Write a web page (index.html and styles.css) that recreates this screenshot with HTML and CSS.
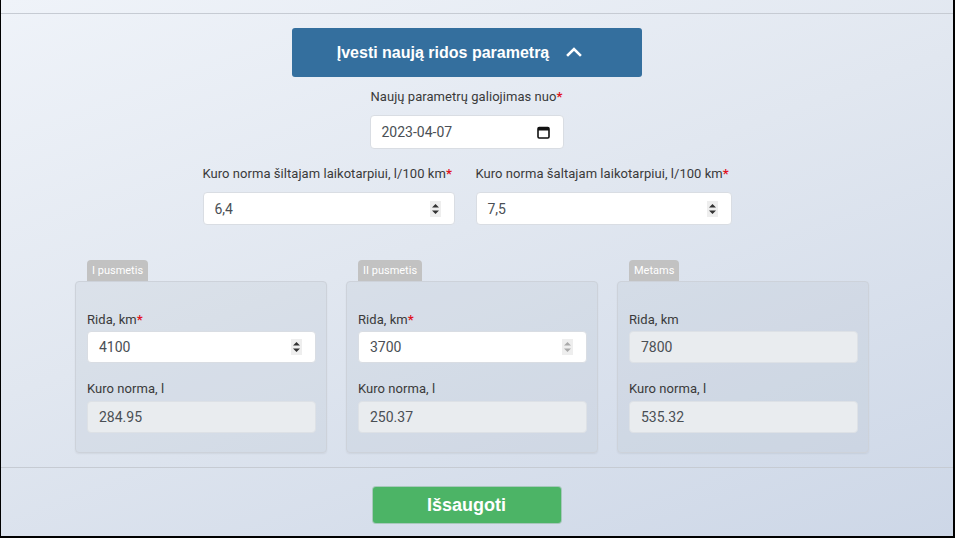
FILE: index.html
```html
<!DOCTYPE html>
<html lang="lt">
<head>
<meta charset="utf-8">
<title>Ridos parametrai</title>
<link rel="stylesheet" href="styles.css">
</head>
<body>
<div class="frame">
  <div class="topline"></div>
  <div class="content">
    <button class="toggle" type="button">
      <span>Įvesti naują ridos parametrą</span>
      <svg class="chev" width="16" height="11" viewBox="0 0 16 11"><path d="M2 9 L8 3 L14 9" fill="none" stroke="#fff" stroke-width="2.6" stroke-linecap="square"/></svg>
    </button>

    <div class="field center">
      <label class="lbl">Naujų parametrų galiojimas nuo<span class="req">*</span></label>
      <div class="inp date">
        <span class="val">2023-04-07</span>
        <svg class="cal" width="13" height="13" viewBox="0 0 13 13"><rect x="1" y="1.5" width="11" height="10.5" rx="1.2" fill="none" stroke="#111" stroke-width="1.6"/><rect x="1" y="1.5" width="11" height="3" fill="#111"/></svg>
      </div>
    </div>

    <div class="row">
      <div class="field w252">
        <label class="lbl">Kuro norma šiltajam laikotarpiui, l/100 km<span class="req">*</span></label>
        <div class="inp"><span class="val">6,4</span><span class="spin"><svg width="11" height="16" viewBox="0 0 11 16"><path d="M2 6.5 L5.5 3 L9 6.5 Z M2 9.5 L5.5 13 L9 9.5 Z" fill="#333"/></svg></span></div>
      </div>
      <div class="field w256">
        <label class="lbl">Kuro norma šaltajam laikotarpiui, l/100 km<span class="req">*</span></label>
        <div class="inp"><span class="val">7,5</span><span class="spin"><svg width="11" height="16" viewBox="0 0 11 16"><path d="M2 6.5 L5.5 3 L9 6.5 Z M2 9.5 L5.5 13 L9 9.5 Z" fill="#333"/></svg></span></div>
      </div>
    </div>

    <div class="groups">
      <div class="group">
        <div class="legend">I pusmetis</div>
        <div class="box">
          <label class="lbl">Rida, km<span class="req">*</span></label>
          <div class="inp small"><span class="val">4100</span><span class="spin"><svg width="11" height="16" viewBox="0 0 11 16"><path d="M2 6.5 L5.5 3 L9 6.5 Z M2 9.5 L5.5 13 L9 9.5 Z" fill="#333"/></svg></span></div>
          <label class="lbl second">Kuro norma, l</label>
          <div class="inp small ro"><span class="val">284.95</span></div>
        </div>
      </div>
      <div class="group">
        <div class="legend">II pusmetis</div>
        <div class="box">
          <label class="lbl">Rida, km<span class="req">*</span></label>
          <div class="inp small"><span class="val">3700</span><span class="spin"><svg width="11" height="16" viewBox="0 0 11 16"><path d="M2 6.5 L5.5 3 L9 6.5 Z M2 9.5 L5.5 13 L9 9.5 Z" fill="#aaa"/></svg></span></div>
          <label class="lbl second">Kuro norma, l</label>
          <div class="inp small ro"><span class="val">250.37</span></div>
        </div>
      </div>
      <div class="group">
        <div class="legend">Metams</div>
        <div class="box">
          <label class="lbl">Rida, km</label>
          <div class="inp small ro"><span class="val">7800</span></div>
          <label class="lbl second">Kuro norma, l</label>
          <div class="inp small ro"><span class="val">535.32</span></div>
        </div>
      </div>
    </div>
  </div>
  <div class="bottomline"></div>
  <div class="actions">
    <button class="save" type="button">Išsaugoti</button>
  </div>
</div>
</body>
</html>
```
FILE: styles.css
```css
html, body {
  margin: 0;
  padding: 0;
}
body {
  font-family: Roboto, "Liberation Sans", Arial, sans-serif;
  color: #333;
}
.frame {
  box-sizing: border-box;
  width: 955px;
  height: 538px;
  border-left: 1px solid #000;
  border-right: 2px solid #000;
  border-bottom: 2px solid #000;
  background: linear-gradient(160deg, #eff3f9 0%, #e1e7f0 45%, #cdd7e7 100%);
  overflow: hidden;
}
.topline {
  margin-top: 13px;
  border-top: 1px solid #c6cbd3;
}
.content {
  padding-right: 21px;
  display: flex;
  flex-direction: column;
  align-items: center;
}
.toggle {
  margin-top: 14px;
  width: 350px;
  height: 49px;
  border: 0;
  border-radius: 3px;
  background: #346f9e;
  color: #fff;
  font-family: "Liberation Sans", Arial, sans-serif;
  font-weight: bold;
  font-size: 16px;
  display: flex;
  align-items: center;
  justify-content: center;
  gap: 17px;
  padding: 0 14px 0 0;
}
.chev {
  margin-top: -2px;
}
.field {
  display: flex;
  flex-direction: column;
}
.field.center {
  align-items: center;
  margin-top: 10px;
}
.lbl {
  font-size: 13px;
  line-height: 20px;
  color: #3a3a3a;
  display: block;
  letter-spacing: 0.05px;
}
.req {
  color: #e0141e;
  font-weight: bold;
}
.inp {
  box-sizing: border-box;
  background: #fff;
  border: 1px solid #d9dde3;
  border-radius: 4px;
  height: 34px;
  display: flex;
  align-items: center;
  padding: 0 10px 0 11px;
  font-size: 14px;
  color: #4a4f55;
}
.val {
  flex: 1;
}
.field.center .lbl {
  margin-bottom: 8px;
}
.date {
  width: 194px;
}
.cal {
  margin-right: 3px;
}
.spin {
  width: 11px;
  height: 16px;
  background: #eeeeee;
  display: flex;
  margin-right: 3px;
}
.row {
  display: flex;
  gap: 21px;
  margin-top: 15px;
  margin-left: 1px;
}
.row .lbl {
  margin-bottom: 8px;
}
.row .inp {
  height: 33px;
}
.w252 { width: 252px; }
.w256 { width: 256px; }
.w252 .inp, .w256 .inp { width: 100%; }
.groups {
  display: flex;
  gap: 19px;
  margin-top: 35px;
  margin-left: 11px;
}
.group {
  width: 252px;
  display: flex;
  flex-direction: column;
  align-items: flex-start;
}
.legend {
  margin-left: 12px;
  background: #c2c2c2;
  color: #fff;
  font-size: 11px;
  line-height: 21px;
  padding: 0 5px;
  border-radius: 4px 4px 0 0;
}
.box {
  box-sizing: border-box;
  width: 100%;
  height: 172px;
  border: 1px solid #cdd2da;
  border-radius: 4px;
  background: rgba(180, 188, 200, 0.18);
  box-shadow: 0 1px 2px rgba(0, 0, 0, 0.06);
  padding: 28px 10px 0 11px;
}
.box .lbl {
  margin-bottom: 1px;
}
.box .lbl.second {
  margin-top: 16px;
  margin-bottom: 2px;
}
.inp.small {
  height: 32px;
  width: 100%;
}
.inp.ro {
  background: #e9ecef;
  border-color: #dde1e6;
}
.bottomline {
  margin-top: 14px;
  border-top: 1px solid #c6cbd3;
}
.actions {
  display: flex;
  justify-content: center;
  padding-right: 21px;
  margin-top: 19px;
}
.save {
  width: 188px;
  height: 36px;
  border: 0;
  border-radius: 3px;
  background: #4cb466;
  color: #fff;
  font-family: "Liberation Sans", Arial, sans-serif;
  font-weight: bold;
  font-size: 18px;
  box-shadow: 0 0 0 1px rgba(60, 150, 80, 0.3);
}
```
